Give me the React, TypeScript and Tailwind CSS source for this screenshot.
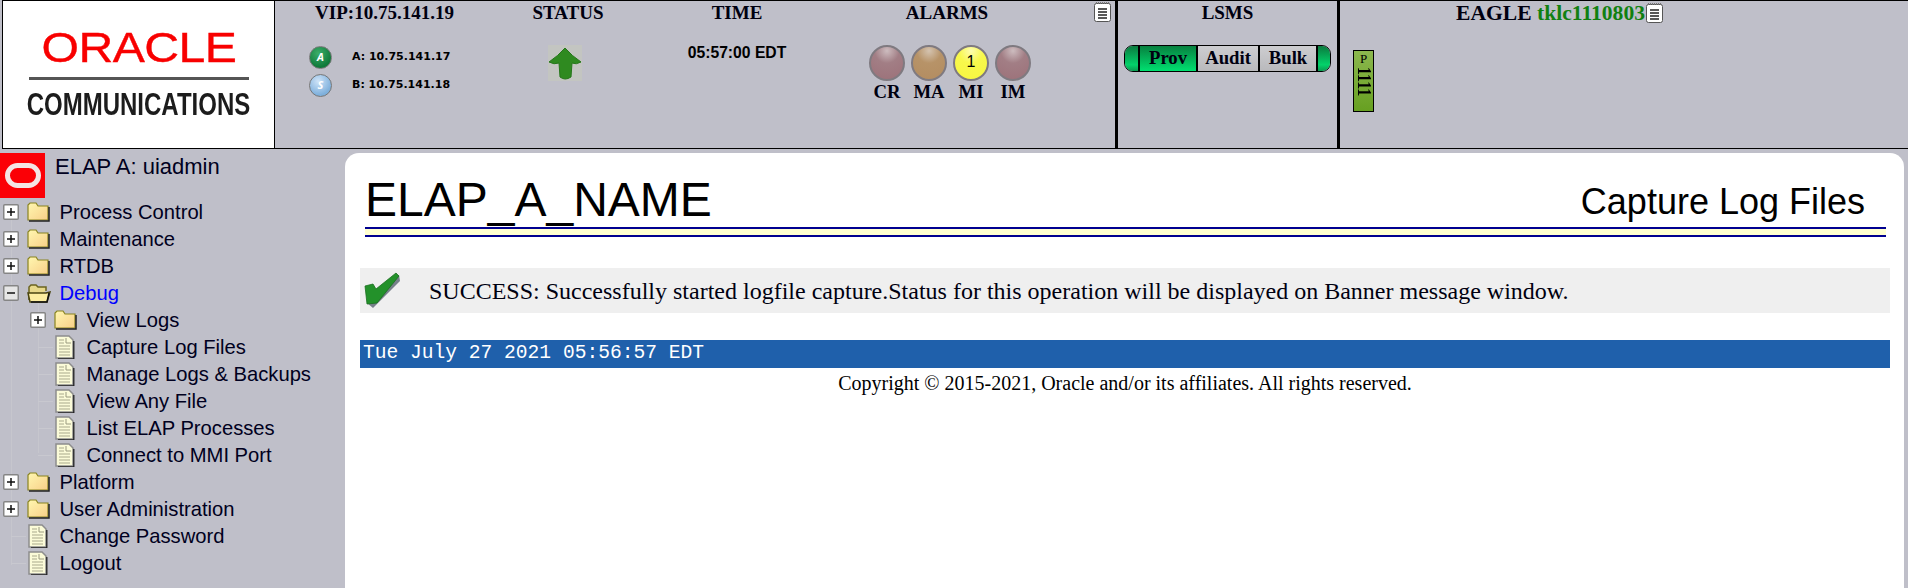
import React from 'react';

const menuTop = [
  { label: 'Process Control', type: 'folder' },
  { label: 'Maintenance', type: 'folder' },
  { label: 'RTDB', type: 'folder' },
];

const debugItems = ['Capture Log Files', 'Manage Logs & Backups', 'View Any File', 'List ELAP Processes', 'Connect to MMI Port'];

const alarms = [
  { label: 'CR', cls: 'bg-[radial-gradient(circle_at_50%_12%,#cdbcbf_0%,#a27e85_38%,#9c7179_100%)]' },
  { label: 'MA', cls: 'bg-[radial-gradient(circle_at_50%_12%,#d4c3b0_0%,#b79368_38%,#b38c60_100%)]' },
  { label: 'MI', cls: 'bg-[radial-gradient(circle_at_50%_12%,#fdfdb0_0%,#f8f84c_38%,#f6f640_100%)]', count: '1' },
  { label: 'IM', cls: 'bg-[radial-gradient(circle_at_50%_12%,#cdbcbf_0%,#a27e85_38%,#9c7179_100%)]' },
];

function NoteIcon() {
  return (
    <svg width="17" height="20" viewBox="0 0 17 20" className="shrink-0">
      <rect x="0.5" y="1.5" width="16" height="18" rx="2" fill="#fff" stroke="#555" />
      <path d="M2 1h13" stroke="#777" strokeWidth="2" strokeDasharray="1 1" />
      <path d="M4 7h9M4 10h9M4 13h9M4 16h9" stroke="#222" strokeWidth="1.5" />
    </svg>
  );
}

function PlusBox({ open }: { open?: boolean }) {
  return (
    <svg width="16" height="16" viewBox="0 0 16 16" className="shrink-0">
      <rect x="0.75" y="0.75" width="14.5" height="14.5" rx="1" fill={open ? '#e6e6e6' : '#fff'} stroke="#858585" strokeWidth="1.5" />
      <path d={open ? 'M4 8h8' : 'M4 8h8M8 4v8'} stroke="#111" strokeWidth="1.5" />
    </svg>
  );
}

function Folder({ open }: { open?: boolean }) {
  if (open) {
    return (
      <svg width="24" height="20" viewBox="0 0 24 20" className="shrink-0">
        <path d="M2 17V4l2-2h5l2 2h8v4" fill="#e8d98a" stroke="#6b6420" strokeWidth="1.5" />
        <path d="M1 10h18l4-1-3 10H3z" fill="#fdeea0" stroke="#4a4410" strokeWidth="1.5" />
        <path d="M22 10l-2 9H4" fill="none" stroke="#111" strokeWidth="1.5" />
      </svg>
    );
  }
  return (
    <svg width="23" height="20" viewBox="0 0 23 20" className="shrink-0">
      <defs>
        <linearGradient id="folderFill" x1="0" y1="0" x2="1" y2="1">
          <stop offset="0" stopColor="#fff7b0" />
          <stop offset="1" stopColor="#f8cf88" />
        </linearGradient>
      </defs>
      <path d="M1 18V3l2-2h6l2 3h10v14z" fill="url(#folderFill)" stroke="#8a8420" strokeWidth="1.2" />
      <path d="M22 5v14H2" fill="none" stroke="#222" strokeWidth="1.5" />
    </svg>
  );
}

function FileIcon() {
  return (
    <svg width="20" height="24" viewBox="0 0 20 24" className="shrink-0">
      <path d="M1 1h13l4 4v18H1z" fill="#fbfbd8" stroke="#8d8d8d" strokeWidth="1.5" />
      <path d="M18.8 6v18H3" fill="none" stroke="#222" strokeWidth="1.3" />
      <path d="M4 5h5M4 8h5M4 11h11M4 14h11M4 17h11M4 20h11" stroke="#a9a98c" strokeWidth="1" />
      <path d="M11 3v5h5" fill="none" stroke="#9a9a80" strokeWidth="1" />
    </svg>
  );
}

function TreeRow({ label, type, indent, active, open }: { label: string; type: 'folder' | 'file'; indent?: boolean; active?: boolean; open?: boolean }) {
  return (
    <div className={`relative flex h-[27px] items-center ${indent ? 'pl-[30px]' : 'pl-[3px]'}`}>
      <span className="flex w-[24px] shrink-0">
        {type === 'folder' ? <PlusBox open={open} /> : <span className="ml-[8px] mr-[1px] mt-[1px] h-px w-full bg-[#c8c8cf]" />}
      </span>
      <span className="flex w-[33px] shrink-0">{type === 'folder' ? <Folder open={open} /> : <span className="ml-[1px]"><FileIcon /></span>}</span>
      <span className={`-ml-[0.5px] whitespace-nowrap pt-[2px] text-[20.2px] leading-none ${active ? 'text-[#0000ff]' : 'text-[#000020]'}`}>{label}</span>
    </div>
  );
}

function Sidebar() {
  return (
    <aside className="relative w-[345px] shrink-0 font-['Liberation_Sans',sans-serif]">
      <div className="flex h-[45px]">
        <div className="flex h-[45px] w-[45px] items-center justify-center bg-[#fb0006]">
          <span className="h-[25px] w-[36px] rounded-[13px] border-[5px] border-[#f4e4e4] bg-[#fb0006]" />
        </div>
        <span className="ml-[10px] text-[22px] leading-[28px] text-[#000020]">ELAP A: uiadmin</span>
      </div>
      <div className="absolute left-[11px] top-[60px] h-[352px] w-px bg-[#c6c6cd]" />
      <div className="absolute left-[38px] top-[150px] h-[150px] w-px bg-[#c6c6cd]" />
      <nav className="relative">
        {menuTop.map((m) => (
          <TreeRow key={m.label} label={m.label} type="folder" />
        ))}
        <TreeRow label="Debug" type="folder" active open />
        <TreeRow label="View Logs" type="folder" indent />
        {debugItems.map((d) => (
          <TreeRow key={d} label={d} type="file" indent />
        ))}
        <TreeRow label="Platform" type="folder" />
        <TreeRow label="User Administration" type="folder" />
        <TreeRow label="Change Password" type="file" />
        <TreeRow label="Logout" type="file" />
      </nav>
    </aside>
  );
}

function Banner() {
  const heading = "h-[24px] text-center text-[19px] font-bold leading-[24px] font-['Liberation_Serif',serif] text-[#000010]";
  return (
    <header className="ml-[2px] flex h-[149px] shrink-0 border-y border-black">
      <div className="flex w-[273px] shrink-0 flex-col items-center border-x border-black bg-white pt-[23px] font-['Liberation_Sans',sans-serif]">
        <span className="origin-center scale-x-[1.12] text-[43px] leading-[46px] tracking-[-0.5px] text-[#f80000] blur-[0.4px] [-webkit-text-stroke:0.4px_#f80000]">ORACLE</span>
        <span className="mt-[7px] h-[3px] w-[220px] bg-[#555]" />
        <span className="mt-[11px] scale-y-[1.3] text-[24px] font-bold leading-[28px] text-[#1c1c1c] blur-[0.4px]">COMMUNICATIONS</span>
      </div>

      <div className="w-[219px] shrink-0">
        <div className={heading}>VIP:10.75.141.19</div>
        <div className="mt-[18px] flex flex-col pl-[34px]">
          {[
            { ip: 'A: 10.75.141.17', letter: 'A', cls: 'bg-[radial-gradient(circle_at_40%_30%,#3cae6a,#0f7a3a_70%)] text-white' },
            { ip: 'B: 10.75.141.18', letter: 'S', cls: 'bg-[radial-gradient(circle_at_40%_30%,#cfe4f8,#7fb0dc_70%)] text-white' },
          ].map((r) => (
            <div key={r.ip} className="flex h-[28px] items-center gap-[20px]">
              <span className={`flex h-[23px] w-[23px] items-center justify-center rounded-full border border-[#777] text-[11px] font-bold italic ${r.cls}`}>{r.letter}</span>
              <span className="text-[11px] font-bold font-['DejaVu_Sans',sans-serif] text-black">{r.ip}</span>
            </div>
          ))}
        </div>
      </div>

      <div className="w-[148px] shrink-0">
        <div className={heading}>STATUS</div>
        <div className="mt-[20px] flex justify-center pr-[6px]">
          <svg width="34" height="36" viewBox="0 0 34 36" className="bg-[#c3c5c1]">
            <path d="M17 3 Q24 11 33 17 Q28 20 24 18 L23 32 Q17 36 12 32 L11 18 Q6 20 1 17 Q10 11 17 3 Z" fill="#2f8a20" stroke="#26771a" strokeWidth="1" strokeLinejoin="round" />
          </svg>
        </div>
      </div>

      <div className="w-[190px] shrink-0">
        <div className={heading}>TIME</div>
        <div className="mt-[18px] text-center text-[15.7px] font-bold leading-[20px] font-['Liberation_Sans',sans-serif] text-black">05:57:00 EDT</div>
      </div>

      <div className="w-[230px] shrink-0">
        <div className={heading}>ALARMS</div>
        <div className="mt-[20px] flex justify-center pl-[6px]">
          {alarms.map((a) => (
            <div key={a.label} className="flex w-[42px] flex-col items-center">
              <span className={`flex h-[36px] w-[36px] items-center justify-center rounded-full border-2 border-[#7f7a80] pb-[2px] text-[16px] leading-none font-['Liberation_Sans',sans-serif] text-black ${a.cls}`}>{a.count}</span>
              <span className="text-[18.72px] font-bold leading-[22px] font-['Liberation_Serif',serif] text-[#000010]">{a.label}</span>
            </div>
          ))}
        </div>
      </div>

      <div className="flex w-[53px] shrink-0 justify-end pr-[4px] pt-[1px]">
        <NoteIcon />
      </div>

      <div className="w-[225px] shrink-0 border-x-[3px] border-black">
        <div className={heading}>LSMS</div>
        <div className="ml-[6px] mt-[20px] flex h-[27px] w-[207px] overflow-hidden rounded-[9px] border border-black font-['Liberation_Serif',serif] text-[18.72px] font-bold leading-[24px] text-[#000010]">
          <span className="w-[13px] shrink-0 bg-[linear-gradient(#0a7a3e,#03d26a_75%,#0a9a50)]" />
          <span className="w-[60px] border-x-2 border-black bg-[linear-gradient(#07803f,#00e070)] text-center">Prov</span>
          <span className="w-[60px] bg-[linear-gradient(#cdcdd0,#b9b9bc)] text-center">Audit</span>
          <span className="w-[60px] border-x-2 border-black bg-[linear-gradient(#cdcdd0,#b9b9bc)] text-center">Bulk</span>
          <span className="flex-1 bg-[linear-gradient(#0a7a3e,#03d26a_75%,#0a9a50)]" />
        </div>
      </div>

      <div className="min-w-0 flex-1">
        <div className="flex h-[24px] items-center pl-[116px]">
          <span className="text-[21.6px] font-bold leading-[24px] font-['Liberation_Serif',serif] text-[#000010]">
            EAGLE <span className="text-[#118011]">tklc1110803</span>
          </span>
          <span className="ml-[1px]">
            <NoteIcon />
          </span>
        </div>
        <div className="ml-[13px] mt-[25px] flex h-[62px] w-[21px] flex-col items-center border border-black bg-[linear-gradient(#8cb84e,#67a021)] font-['Liberation_Serif',serif]">
          <span className="text-[13px] leading-[15px] text-black">P</span>
          <span className="mt-[1px] scale-x-[1.2] text-[16px] font-bold leading-[16px] text-black [writing-mode:vertical-rl]">1111</span>
        </div>
      </div>
    </header>
  );
}

function Content() {
  return (
    <main className="mr-[4px] min-w-0 flex-1 rounded-t-[14px] bg-white pl-[15px] pr-[14px]">
      <div className="ml-[5px] mr-[4px] flex h-[74px] items-end justify-between font-['Liberation_Sans',sans-serif] text-black">
        <span className="mb-[-1px] text-[48px] leading-[56px]">ELAP_A_NAME</span>
        <span className="mb-[5px] mr-[21px] text-[36px] leading-[40px]">Capture Log Files</span>
      </div>
      <div className="ml-[5px] mr-[4px] h-[10px] border-y-2 border-[#000090] bg-[#ffffd0]" />
      <div className="mt-[31px] flex h-[45px] items-center bg-[#efefef] font-['Liberation_Serif',serif]">
        <svg width="36" height="37" viewBox="0 0 36 37" className="ml-[4px] shrink-0">
          <path d="M3 31 L9 36 L36 9 L35 3 Z" fill="#77808a" />
          <path d="M1 14 L9 12 L12 17 L32 1 L35 4 L13 31 L3 32 Z" fill="#23912a" stroke="#1a6e20" strokeWidth="0.8" strokeLinejoin="round" />
        </svg>
        <span className="ml-[29px] whitespace-nowrap text-[24px] text-[#000010]">SUCCESS: Successfully started logfile capture.Status for this operation will be displayed on Banner message window.</span>
      </div>
      <div className="mt-[27px] flex h-[28px] items-center bg-[#1f60ab] pl-[3px] font-['Liberation_Mono',monospace] text-[19.6px] text-white">Tue July 27 2021 05:56:57 EDT</div>
      <div className="pt-[1px] text-center font-['Liberation_Serif',serif] text-[20px] leading-[28px] text-black">Copyright © 2015-2021, Oracle and/or its affiliates. All rights reserved.</div>
    </main>
  );
}

export default function App() {
  return (
    <div className="flex h-[588px] w-[1908px] flex-col overflow-hidden bg-[#bfbfc9]">
      <Banner />
      <div className="mt-[4px] flex min-h-0 flex-1">
        <Sidebar />
        <Content />
      </div>
    </div>
  );
}
